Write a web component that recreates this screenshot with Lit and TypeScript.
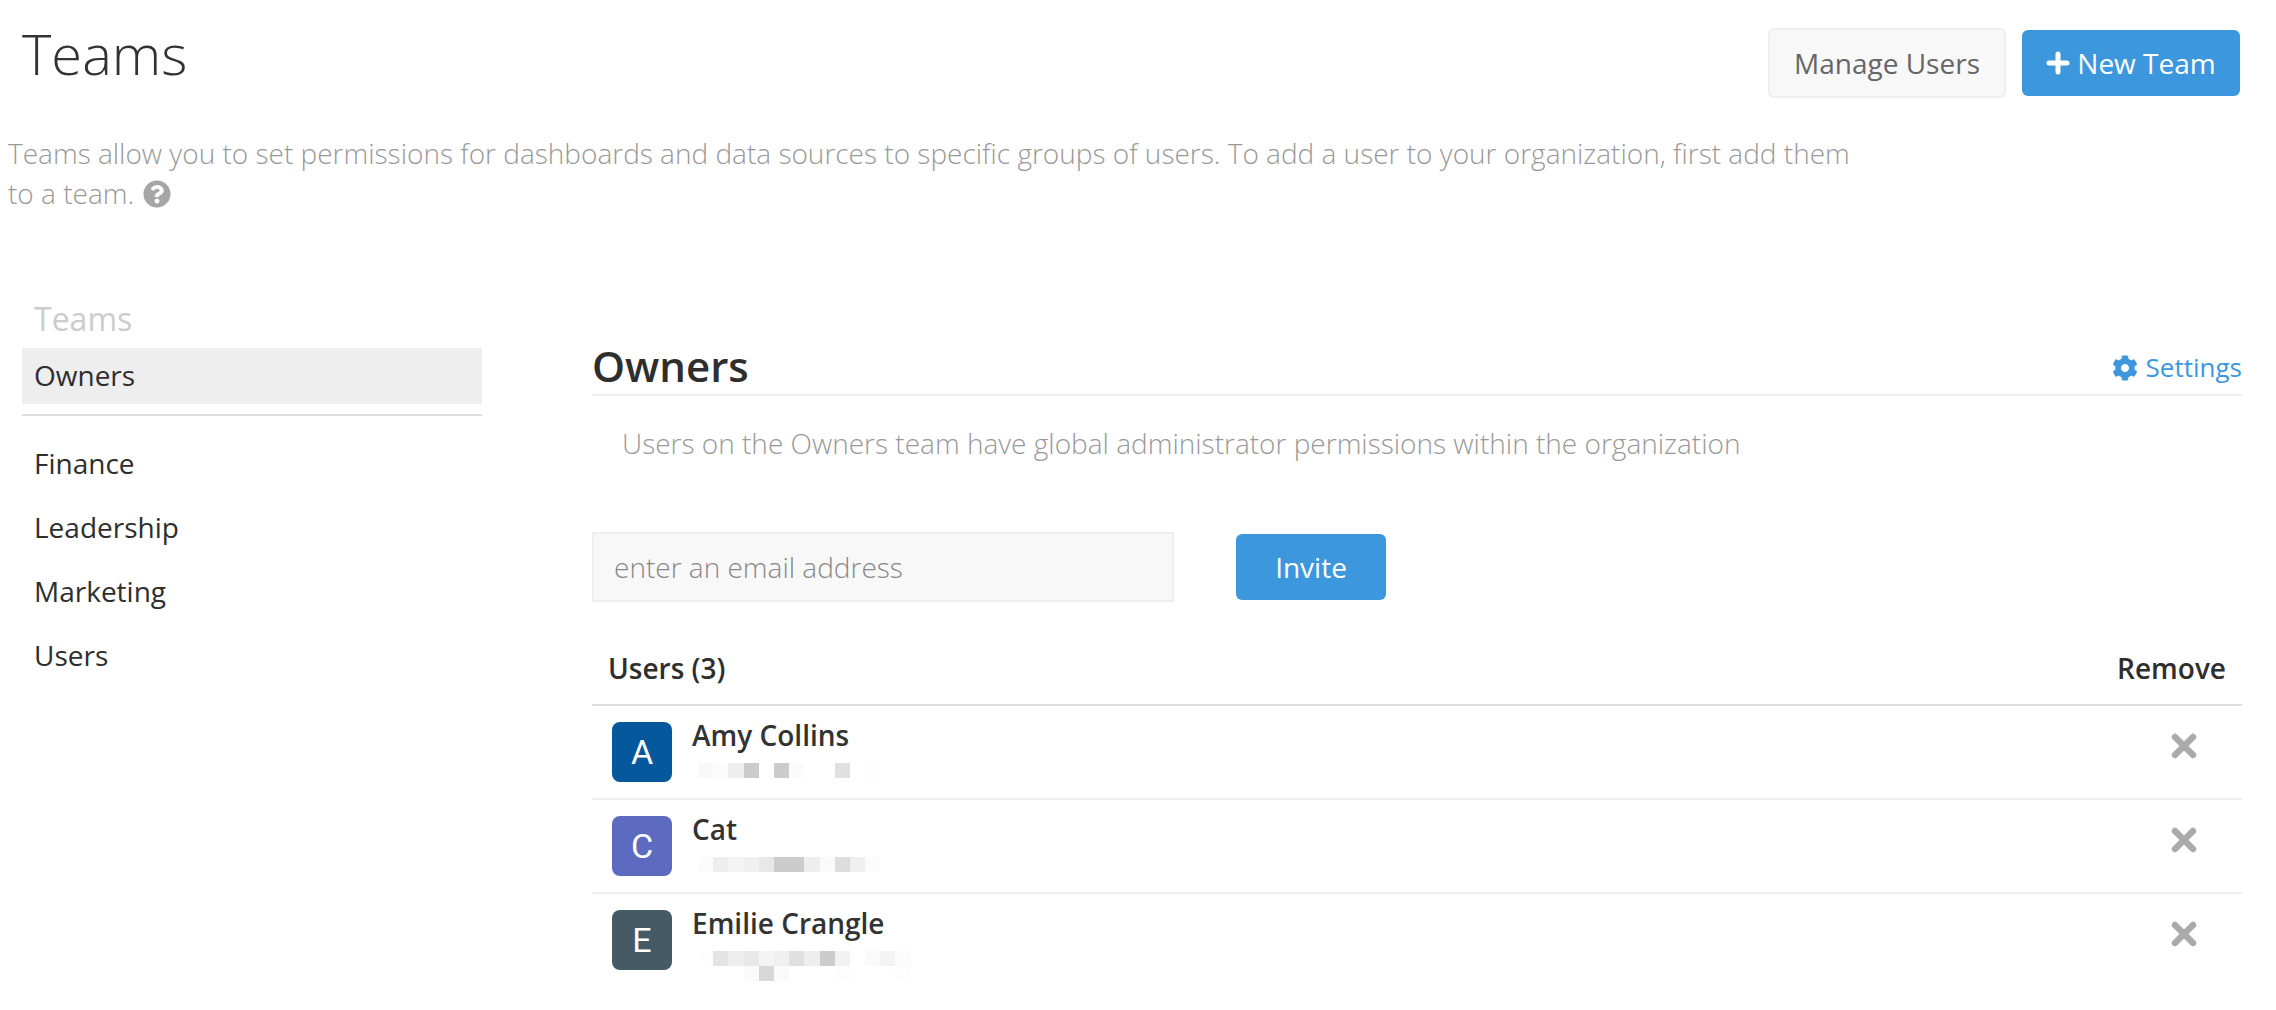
import { LitElement, html, css, svg } from "lit";
import { customElement } from "lit/decorators.js";

const GEAR = "M487.4 315.7l-42.6-24.6c4.3-23.2 4.3-47 0-70.2l42.6-24.6c4.9-2.8 7.1-8.6 5.5-14-11.1-35.6-30-67.8-54.7-94.6-3.8-4.1-10-5.1-14.8-2.3L380.8 110c-17.9-15.4-38.5-27.3-60.8-35.1V25.8c0-5.6-3.9-10.5-9.4-11.7-36.7-8.2-74.3-7.8-109.2 0-5.5 1.2-9.4 6.1-9.4 11.7V75c-22.2 7.9-42.8 19.8-60.8 35.1L88.7 85.5c-4.9-2.8-11-1.9-14.8 2.3-24.7 26.7-43.6 58.9-54.7 94.6-1.7 5.4.6 11.2 5.5 14L67.3 221c-4.3 23.2-4.3 47 0 70.2l-42.6 24.6c-4.9 2.8-7.1 8.6-5.5 14 11.1 35.6 30 67.8 54.7 94.6 3.8 4.1 10 5.1 14.8 2.3l42.6-24.6c17.9 15.4 38.5 27.3 60.8 35.1v49.2c0 5.6 3.9 10.5 9.4 11.7 36.7 8.2 74.3 7.8 109.2 0 5.5-1.2 9.4-6.1 9.4-11.7v-49.2c22.2-7.9 42.8-19.8 60.8-35.1l42.6 24.6c4.9 2.8 11 1.9 14.8-2.3 24.7-26.7 43.6-58.9 54.7-94.6 1.5-5.5-.7-11.3-5.6-14.1zM256 336c-44.1 0-80-35.9-80-80s35.9-80 80-80 80 35.9 80 80-35.9 80-80 80z";
const QUESTION = "M504 256c0 136.997-111.043 248-248 248S8 392.997 8 256C8 119.083 119.043 8 256 8s248 111.083 248 248zM262.655 90c-54.497 0-89.255 22.957-116.549 63.758-3.536 5.286-2.353 12.415 2.715 16.258l34.699 26.31c5.205 3.947 12.621 3.008 16.665-2.122 17.864-22.658 30.113-35.797 57.303-35.797 20.429 0 45.698 13.148 45.698 32.958 0 14.976-12.363 22.667-32.534 33.976C247.128 238.528 216 254.941 216 296v4c0 6.627 5.373 12 12 12h56c6.627 0 12-5.373 12-12v-1.333c0-28.462 83.186-29.647 83.186-106.667 0-58.002-60.165-102-116.531-102zM256 338c-25.365 0-46 20.635-46 46 0 25.364 20.635 46 46 46s46-20.636 46-46c0-25.365-20.635-46-46-46z";

interface U { name: string; letter: string; color: string; rows: number[][]; }

const USERS: U[] = [
  { name: "Amy Collins", letter: "A", color: "#04589b",
    rows: [[0xf8,0xfc,0xee,0xcc,0xff,0xcc,0xfb,0xff,0xff,0xe0,0xff,0xfe]] },
  { name: "Cat", letter: "C", color: "#5c6bc0",
    rows: [[0xfc,0xee,0xf4,0xf0,0xe8,0xcc,0xcc,0xee,0xfa,0xdd,0xf0,0xfc]] },
  { name: "Emilie Crangle", letter: "E", color: "#455a64",
    rows: [
      [0xfe,0xe4,0xee,0xe8,0xf4,0xf0,0xe0,0xee,0xcc,0xf2,0xff,0xfa,0xf4,0xfc],
      [0xff,0xff,0xff,0xfa,0xd8,0xfa,0xff,0xff,0xff,0xfd,0xff,0xff,0xff,0xfd],
    ] },
];

const icon = (d: string, cls: string) =>
  html`<svg class=${cls} viewBox="0 0 512 512">${svg`<path fill="currentColor" d=${d}></path>`}</svg>`;

@customElement("app-root")
export class AppRoot extends LitElement {
  static styles = css`
    :host {
      display: block;
      width: 2276px;
      height: 1010px;
      overflow: hidden;
      background: #fff;
      font-family: "Open Sans", sans-serif;
      color: #2e2e2e;
      box-sizing: border-box;
    }
    .header {
      display: flex;
      justify-content: space-between;
      align-items: flex-start;
      padding: 28px 36px 0 22px;
    }
    h1 {
      margin: -3px 0 0;
      font-size: 56px;
      font-weight: 300;
      line-height: 56px;
      color: #333;
    }
    .actions { display: flex; align-items: center; gap: 16px; }
    .btn {
      display: flex;
      align-items: center;
      justify-content: center;
      box-sizing: border-box;
      font-size: 28px;
      border-radius: 6px;
    }
    .btn.secondary {
      width: 238px;
      height: 70px;
      background: #f8f8f8;
      border: 2px solid #eee;
      color: #666;
    }
    .btn.primary {
      background: #3d97dd;
      color: #fff;
    }
    .btn.new { width: 218px; height: 66px; gap: 7px; }
    .plus { width: 24px; height: 24px; }
    .intro {
      margin: 35px 0 0 8px;
      width: 1860px;
      font-size: 28px;
      font-weight: 300;
      line-height: 40px;
      color: #999;
    }
    .q { width: 28px; height: 28px; color: #a6a6a6; vertical-align: -4px; margin-left: 2px; }
    .content { display: flex; margin-top: 84px; padding-left: 22px; }
    .side { width: 460px; flex: none; }
    .side-title {
      padding-left: 12px;
      font-size: 32px;
      line-height: 44px;
      color: #ccc;
      height: 44px;
      margin-bottom: 7px;
    }
    .side-item {
      padding-left: 12px;
      font-size: 28px;
      line-height: 64px;
    }
    .side-item.active {
      background: #eee;
      line-height: 54px;
      padding-bottom: 2px;
    }
    .side-div {
      height: 2px;
      background: #ddd;
      margin: 10px 0 15px;
    }
    .main { width: 1650px; margin-left: 110px; }
    .main-head {
      display: flex;
      justify-content: space-between;
      align-items: flex-end;
      height: 58px;
      margin-top: 39px;
      border-bottom: 2px solid #eee;
    }
    h2 { margin: 0; font-size: 42px; font-weight: 600; line-height: 56px; color: #2e2e2e; }
    .settings {
      display: flex;
      align-items: center;
      gap: 8px;
      font-size: 26px;
      line-height: 53px;
      color: #3d97dd;
    }
    .gear { width: 26px; height: 26px; }
    .team-desc {
      margin: 27px 0 0 30px;
      font-size: 28px;
      font-weight: 300;
      line-height: 40px;
      color: #999;
    }
    .invite { display: flex; align-items: center; margin-top: 69px; gap: 62px; }
    .email {
      box-sizing: border-box;
      width: 582px;
      height: 70px;
      background: #f8f8f8;
      border: 2px solid #eee;
      padding-left: 20px;
      display: flex;
      align-items: center;
      font-size: 28px;
      font-weight: 300;
      color: #888;
    }
    .btn.inv { width: 150px; height: 66px; }
    .thead {
      display: flex;
      justify-content: space-between;
      align-items: center;
      height: 104px;
      box-sizing: border-box;
      padding: 30px 16px 0 16px;
      font-size: 28px;
      font-weight: 600;
      border-bottom: 2px solid #ddd;
    }
    .row {
      display: flex;
      box-sizing: border-box;
      height: 94px;
      padding: 16px 0 0 20px;
      border-bottom: 2px solid #eee;
      position: relative;
    }
    .row:last-child { border-bottom: none; }
    .avatar {
      width: 60px;
      height: 60px;
      flex: none;
      border-radius: 8px;
      color: #fff;
      display: flex;
      align-items: center;
      justify-content: center;
      font-family: Roboto, sans-serif;
      font-size: 34px;
      font-weight: 400;
    }
    .info { margin-left: 20px; flex: 1; }
    .name { font-size: 28px; font-weight: 600; line-height: 36px; margin-top: -5px; color: #333; }
    .mosaic { margin: 10px 0 0 6px; }
    .mrow { display: flex; }
    .cell { width: 15.2px; height: 15px; flex: none; }
    .x { width: 26px; height: 26px; color: #aaa; margin: 11px 45px 0 0; flex: none; }
  `;

  render() {
    return html`
      <div class="header">
        <h1>Teams</h1>
        <div class="actions">
          <div class="btn secondary">Manage Users</div>
          <div class="btn primary new">
            <svg class="plus" viewBox="0 0 24 24"><path d="M12 3v18M3 12h18" stroke="#fff" stroke-width="5" stroke-linecap="round" fill="none"></path></svg>
            <span>New Team</span>
          </div>
        </div>
      </div>
      <div class="intro">
        Teams allow you to set permissions for dashboards and data sources to specific groups of users. To add a user to your organization, first add them to a team. ${icon(QUESTION, "q")}
      </div>
      <div class="content">
        <div class="side">
          <div class="side-title">Teams</div>
          <div class="side-item active">Owners</div>
          <div class="side-div"></div>
          ${["Finance", "Leadership", "Marketing", "Users"].map(
            (t) => html`<div class="side-item">${t}</div>`
          )}
        </div>
        <div class="main">
          <div class="main-head">
            <h2>Owners</h2>
            <div class="settings">${icon(GEAR, "gear")}<span>Settings</span></div>
          </div>
          <div class="team-desc">Users on the Owners team have global administrator permissions within the organization</div>
          <div class="invite">
            <div class="email">enter an email address</div>
            <div class="btn primary inv">Invite</div>
          </div>
          <div class="thead"><span>Users (3)</span><span>Remove</span></div>
          ${USERS.map(
            (u) => html`
              <div class="row">
                <div class="avatar" style="background:${u.color}">${u.letter}</div>
                <div class="info">
                  <div class="name">${u.name}</div>
                  <div class="mosaic">
                    ${u.rows.map(
                      (r) => html`<div class="mrow">${r.map(
                        (v) => html`<div class="cell" style="background:rgb(${v},${v},${v})"></div>`
                      )}</div>`
                    )}
                  </div>
                </div>
                <svg class="x" viewBox="0 0 26 26"><path d="M4 4l18 18M22 4L4 22" stroke="currentColor" stroke-width="6.5" stroke-linecap="round" fill="none"></path></svg>
              </div>
            `
          )}
        </div>
      </div>
    `;
  }
}
